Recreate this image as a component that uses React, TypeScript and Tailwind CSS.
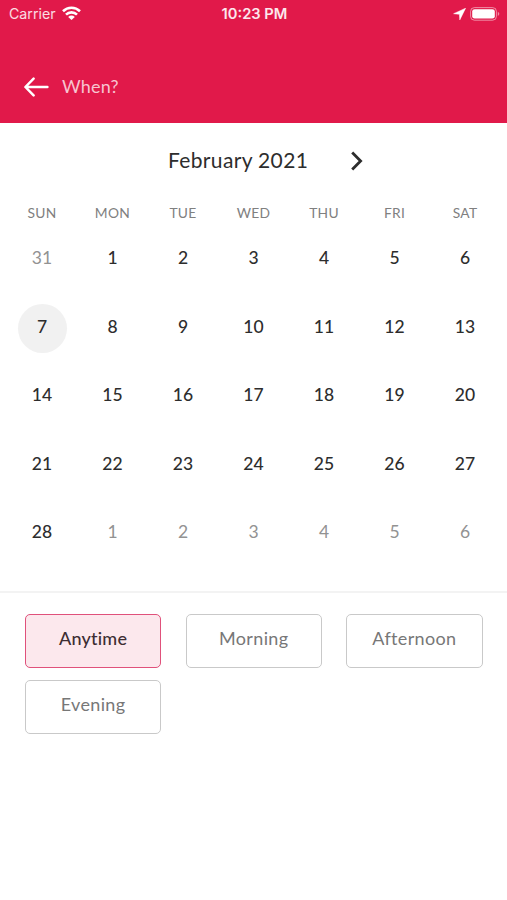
import React, { useState } from 'react';
import clsx from 'clsx';

interface CalendarDay {
  key: string;
  label: number;
  outside: boolean;
}

const weekdays = ['SUN', 'MON', 'TUE', 'WED', 'THU', 'FRI', 'SAT'];
const timeSlots = ['Anytime', 'Morning', 'Afternoon', 'Evening'];

// Jan 31 - Mar 6, five full weeks
const days: CalendarDay[] = [
  { key: 'jan-31', label: 31, outside: true },
  ...Array.from({ length: 28 }, (_, i) => ({ key: `feb-${i + 1}`, label: i + 1, outside: false })),
  ...Array.from({ length: 6 }, (_, i) => ({ key: `mar-${i + 1}`, label: i + 1, outside: true })),
];

const StatusBar = () => (
  <div className="grid grid-cols-3 items-center h-7 pl-[9px] pr-[7px] font-['Inter',sans-serif] text-white">
    <div className="flex items-center">
      <span className="text-[14.2px] leading-7 text-white/85">Carrier</span>
      <svg className="ml-[6px] mb-[2px]" width="19" height="14" viewBox="0 0 19 14" fill="none" stroke="currentColor" strokeWidth="2.6">
        <path d="M1 5.2a12.2 12.2 0 0 1 17 0" />
        <path d="M4 8.6a7.8 7.8 0 0 1 11 0" />
        <path d="M9.5 14 6.2 10.9a4.7 4.7 0 0 1 6.6 0Z" fill="currentColor" stroke="none" />
      </svg>
    </div>
    <span className="text-center text-[14.7px] leading-7 font-semibold whitespace-nowrap text-white/90">10:23 PM</span>
    <div className="flex items-center justify-end mb-px">
      <svg width="13" height="12" viewBox="0 0 13 12" fill="currentColor">
        <path d="M12.6.2.6 5.7l5.8.6.4 5.6Z" stroke="currentColor" strokeWidth="0.5" strokeLinejoin="round" />
      </svg>
      <svg className="ml-[4px]" width="30" height="14" viewBox="0 0 30 14" fill="none">
        <rect x="0.6" y="0.6" width="25.8" height="12.6" rx="3.8" stroke="white" strokeOpacity="0.5" />
        <rect x="2.2" y="2.2" width="22.6" height="9.4" rx="2.4" fill="white" />
        <path d="M27.8 4.8c2 .8 2 3.4 0 4.2Z" fill="white" fillOpacity="0.5" />
      </svg>
    </div>
  </div>
);

const App: React.FC = () => {
  const [selectedDay, setSelectedDay] = useState('feb-7');
  const [slot, setSlot] = useState('Anytime');

  return (
    <div className="min-h-screen bg-white font-['Lato','Liberation_Sans',sans-serif] text-[#2d2d2d]">
      <header className="h-[123px] bg-[#e1194a]">
        <StatusBar />
        <div className="flex items-start pl-6 pt-[44px]">
          <button aria-label="Back" className="mt-[5px] text-white">
            <svg width="25" height="20" viewBox="0 0 25 20" fill="none" stroke="currentColor" strokeWidth="2.5" strokeLinecap="round" strokeLinejoin="round">
              <path d="M9.6 1.6 1.4 10l8.2 8.4M1.8 10H23.4" />
            </svg>
          </button>
          <h1 className="ml-[13px] text-[18px] leading-7 tracking-[0.2px] text-white/75">When?</h1>
        </div>
      </header>

      <section className="h-[468px]">
        <div className="flex items-center h-[74px] pl-[168px]">
          <h2 className="w-[140px] text-[21px] leading-8 tracking-[0.35px] whitespace-nowrap">February 2021</h2>
          <button aria-label="Next month" className="ml-[42px] mt-[2px]">
            <svg width="14" height="20" viewBox="0 0 14 20" fill="none" stroke="currentColor" strokeWidth="2.8">
              <path d="M2.2 1.6 10.6 10l-8.4 8.4" />
            </svg>
          </button>
        </div>

        <div className="grid grid-cols-7 px-[6.75px]">
          {weekdays.map((day) => (
            <span key={day} className="h-[33px] text-center text-[13.8px] leading-8 tracking-[0.3px] text-[#808080]">
              {day}
            </span>
          ))}
        </div>

        <div className="grid grid-cols-7 auto-rows-[68.4px] px-[6.75px] pt-[6px]">
          {days.map((day) => (
            <div key={day.key} className="flex justify-center">
              <button
                onClick={() => setSelectedDay(day.key)}
                className={clsx(
                  'size-[49px] pb-[4px] rounded-full text-[17.5px]',
                  day.outside ? 'text-[#929292]' : 'font-medium',
                  day.key === selectedDay && 'bg-[#f1f1f1]'
                )}
              >
                {day.label}
              </button>
            </div>
          ))}
        </div>
      </section>

      <section className="grid grid-cols-3 gap-x-[24.5px] gap-y-3 border-t-2 border-[#f3f3f3] pl-[25px] pr-[24.5px] pt-[20.5px]">
        {timeSlots.map((name) => (
          <button
            key={name}
            onClick={() => setSlot(name)}
            className={clsx(
              'h-[54px] pb-[5px] border rounded-[5px] text-[18px]',
              name === slot
                ? 'border-[#e0517b] bg-[#fce8ed] font-medium tracking-[0.2px] text-[#3d2e33]'
                : 'border-[#c9c9c9] tracking-[0.35px] text-[#777777]'
            )}
          >
            {name}
          </button>
        ))}
      </section>
    </div>
  );
};

export default App
